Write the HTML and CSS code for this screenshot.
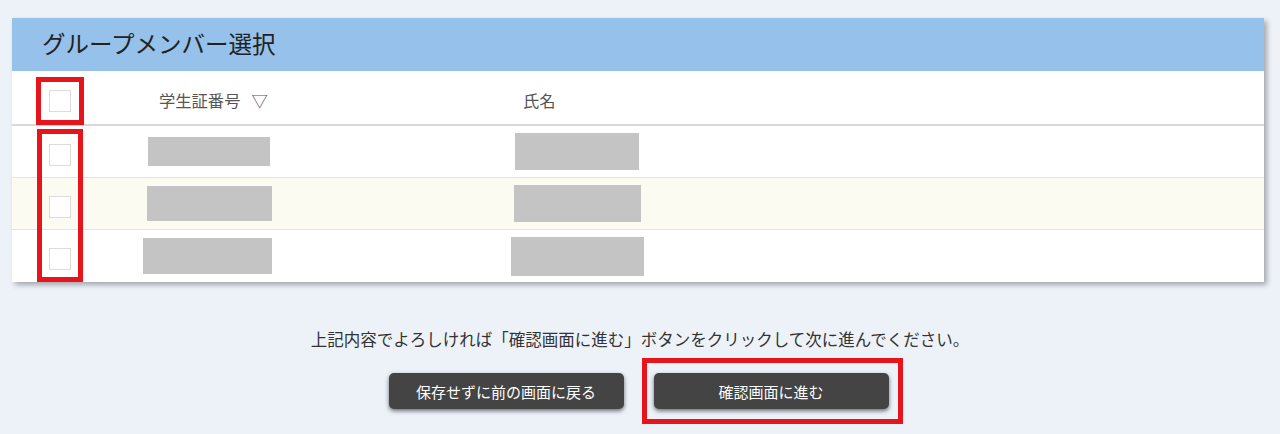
FILE: index.html
```html
<!DOCTYPE html>
<html lang="ja">
<head>
<meta charset="utf-8">
<title>グループメンバー選択</title>
<link rel="stylesheet" href="styles.css">
</head>
<body>
<main class="page">
  <section class="card">
    <h1 class="card-title">グループメンバー選択</h1>
    <div class="table">
      <div class="row head">
        <div class="cell check"><span class="box"></span><span class="mark mark-head"></span></div>
        <div class="cell id"><span class="head-label">学生証番号<span class="sort">▽</span></span></div>
        <div class="cell gap"></div>
        <div class="cell name"><span class="head-label">氏名</span></div>
        <div class="cell rest"></div>
      </div>
      <div class="body">
        <span class="mark mark-rows"></span>
        <div class="row">
          <div class="cell check"><span class="box"></span></div>
          <div class="cell id center"><span class="masked" style="width:122px;height:29px;margin-left:-1px"></span></div>
          <div class="cell gap"></div>
          <div class="cell name center"><span class="masked" style="width:124px;height:37px"></span></div>
          <div class="cell rest"></div>
        </div>
        <div class="row alt">
          <div class="cell check"><span class="box"></span></div>
          <div class="cell id center"><span class="masked" style="width:125px;height:35px"></span></div>
          <div class="cell gap"></div>
          <div class="cell name center"><span class="masked" style="width:127px;height:37px"></span></div>
          <div class="cell rest"></div>
        </div>
        <div class="row">
          <div class="cell check"><span class="box"></span></div>
          <div class="cell id center"><span class="masked" style="width:129px;height:36px;margin-left:-4px"></span></div>
          <div class="cell gap"></div>
          <div class="cell name center"><span class="masked" style="width:133px;height:39px"></span></div>
          <div class="cell rest"></div>
        </div>
      </div>
    </div>
  </section>

  <p class="notice">上記内容でよろしければ「確認画面に進む」ボタンをクリックして次に進んでください。</p>

  <div class="actions">
    <button class="btn" type="button">保存せずに前の画面に戻る</button>
    <span class="btn-wrap"><button class="btn" type="button">確認画面に進む</button></span>
  </div>
</main>
</body>
</html>
```

FILE: styles.css
```css
html, body {
  margin: 0;
  padding: 0;
}

body {
  background: #edf2f9;
  font-family: "Noto Sans CJK JP", "Noto Sans", sans-serif;
  color: #333;
  width: 1280px;
  height: 434px;
  overflow: hidden;
}

.page {
  padding-top: 18px;
}

/* card with blue title bar */
.card {
  margin: 0 16px 0 12px;
  background: #fff;
  box-shadow: 3px 3px 5px rgba(0, 0, 0, 0.3);
}

.card-title {
  margin: 0;
  height: 53px;
  background: #95c1ea;
  padding-left: 30px;
  font-size: 23.5px;
  font-weight: normal;
  line-height: 50px;
  color: #222;
}

.table {
  position: relative;
}

.row {
  display: flex;
  height: 52px;
  border-bottom: 1px solid #e6e3e3;
  box-sizing: border-box;
}

.row.head {
  height: 55px;
  border-bottom: 2px solid #d9d9d9;
}

.body {
  position: relative;
}

.body .row:last-child {
  border-bottom: none;
}

.row.alt {
  background: #fcfbf1;
}

.cell {
  display: flex;
  align-items: center;
  position: relative;
}

.cell.check {
  width: 96px;
  justify-content: center;
  padding-top: 6px;
  box-sizing: border-box;
}

.cell.id {
  width: 202px;
}

.cell.gap {
  width: 130px;
}

.cell.name {
  width: 274px;
}

.cell.rest {
  flex: 1;
}

.cell.center {
  justify-content: center;
}

.head-label {
  font-size: 16.3px;
  color: #555;
  padding-top: 4px;
}

.sort {
  margin-left: 11px;
}

.cell.id .head-label {
  padding-left: 51px;
}

.cell.name .head-label {
  padding-left: 83px;
}

.box {
  width: 20px;
  height: 20px;
  border: 1px solid #dcdcdc;
  background: #fff;
}

.masked {
  display: block;
  background: #c4c4c4;
}

/* red highlight frames drawn over the checkbox column */
.mark {
  position: absolute;
  border: 5px solid #e8141c;
  box-sizing: border-box;
}

.mark-head {
  left: 24px;
  top: 6px;
  width: 48px;
  height: 48px;
}

.mark-rows {
  left: 25px;
  top: 3px;
  width: 46px;
  height: 153px;
  z-index: 2;
}

.notice {
  margin: 45px 0 0;
  text-align: center;
  font-size: 16.5px;
  line-height: 24px;
  color: #333;
}

.actions {
  display: flex;
  justify-content: center;
  gap: 30px;
  margin-top: 22px;
  padding-right: 3px;
}

.btn {
  width: 235px;
  height: 36px;
  border: none;
  border-radius: 5px;
  background: #444;
  color: #fff;
  font-family: "Noto Sans CJK JP", "Noto Sans", sans-serif;
  font-size: 15px;
  box-shadow: 0 2px 4px rgba(0, 0, 0, 0.55);
  cursor: pointer;
}

.btn-wrap {
  position: relative;
  display: inline-block;
}

.btn-wrap::after {
  content: "";
  position: absolute;
  left: -12px;
  top: -15px;
  right: -14px;
  bottom: -15px;
  border: 5px solid #e8141c;
}
```
